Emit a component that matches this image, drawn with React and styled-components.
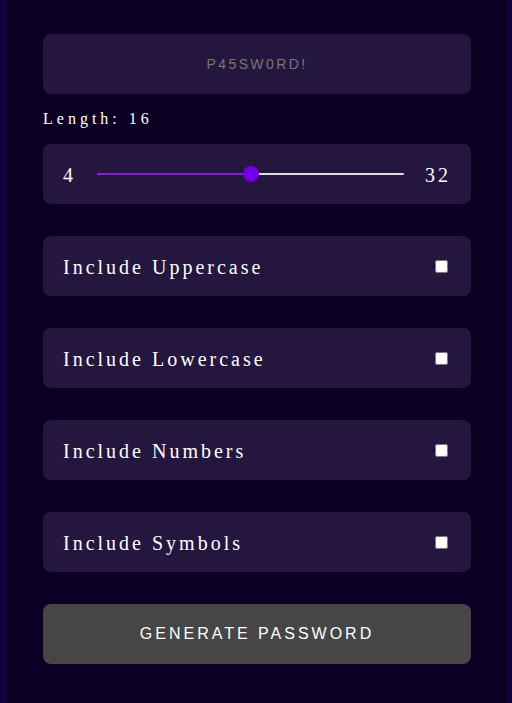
import React, { useState } from "react";
import styled, { createGlobalStyle } from "styled-components";

const Global = createGlobalStyle`
  html { background: #14003a; }
  body { margin: 0; background: #14003a; }
`;

const Page = styled.div`
  box-sizing: border-box;
  width: 500px;
  min-height: 703px;
  margin-left: 7px;
  background: #0b0024;
  padding: 34px 36px 30px 36px;
  display: flex;
  flex-direction: column;
`;

const Card = styled.div`
  box-sizing: border-box;
  height: 60px;
  border-radius: 8px;
  background: #24163f;
  display: flex;
  align-items: center;
  padding: 0 20px;
  margin-bottom: ${(p) => p.$mb || 0}px;
`;

const Display = styled(Card)`
  justify-content: center;
  font-family: "Liberation Sans", Arial, sans-serif;
  font-size: 14px;
  letter-spacing: 2.4px;
  color: #767676;
`;

const Label = styled.div`
  font-family: "Liberation Serif", "Times New Roman", serif;
  font-size: 16px;
  letter-spacing: 4px;
  color: #ffffff;
  margin: 16px 0 16px;
`;

const SerifText = styled.span`
  padding-top: 2px;
  font-family: "Liberation Serif", "Times New Roman", serif;
  font-size: 20px;
  letter-spacing: 3px;
  color: #ffffff;
`;

const SliderRow = styled(Card)`
  gap: 21px;
`;

const Range = styled.input`
  flex: 1;
  appearance: none;
  -webkit-appearance: none;
  height: 2px;
  margin: 0 0 1px 0;
  border-radius: 1px;
  outline: none;
  &::-webkit-slider-thumb {
    -webkit-appearance: none;
    width: 16px;
    height: 16px;
    border-radius: 50%;
    background: #7100e2;
    border: none;
  }
`;

const OptionRow = styled(Card)`
  justify-content: space-between;
`;

const Check = styled.input`
  width: 13px;
  height: 13px;
  margin: 3px 3px 3px 4px;
`;

const Button = styled.button`
  box-sizing: border-box;
  height: 60px;
  border: none;
  border-radius: 8px;
  background: #464646;
  color: #ffffff;
  font-family: "Liberation Sans", Arial, sans-serif;
  font-size: 16px;
  letter-spacing: 3px;
  text-transform: uppercase;
  cursor: pointer;
`;

export default function App() {
  const [len, setLen] = useState(16);
  const min = 0;
  const max = 32;
  const pct = ((len - min) / (max - min)) * 100;
  const options = ["Uppercase", "Lowercase", "Numbers", "Symbols"];
  return (
    <>
      <Global />
      <Page>
        <Display>P45SW0RD!</Display>
        <Label>Length: {len}</Label>
        <SliderRow $mb={32}>
          <SerifText>4</SerifText>
          <Range
            type="range"
            min={min}
            max={max}
            value={len}
            onChange={(e) => setLen(Math.max(4, Number(e.target.value)))}
            style={{
              background: `linear-gradient(to right, #7a25c9 0%, #7a25c9 ${pct}%, #dddddd ${pct}%, #dddddd 100%)`,
            }}
          />
          <SerifText>32</SerifText>
        </SliderRow>
        {options.map((o) => (
          <OptionRow key={o} $mb={32}>
            <SerifText>Include {o}</SerifText>
            <Check type="checkbox" />
          </OptionRow>
        ))}
        <Button>Generate Password</Button>
      </Page>
    </>
  );
}
